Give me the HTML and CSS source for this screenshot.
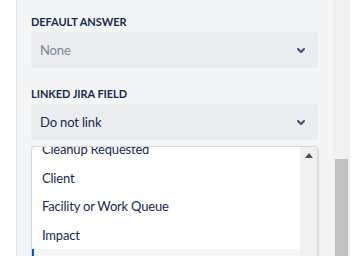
FILE: index.html
```html
<!DOCTYPE html>
<html>
<head>
<meta charset="utf-8">
<link rel="stylesheet" href="styles.css">
</head>
<body>
<div class="screen">
  <div class="gutter"></div>
  <div class="panel">
    <div class="field">
      <div class="label">DEFAULT ANSWER</div>
      <div class="select">
        <span class="value placeholder">None</span>
        <svg class="chev" width="24" height="24" viewBox="0 0 24 24"><path fill="currentColor" d="M8.292 10.293a1.009 1.009 0 000 1.419l2.939 2.965c.218.215.5.322.779.322s.556-.107.769-.322l2.93-2.955a1.01 1.01 0 000-1.419.987.987 0 00-1.406 0l-2.298 2.317-2.307-2.327a.99.99 0 00-1.406 0z"/></svg>
      </div>
    </div>
    <div class="field">
      <div class="label">LINKED JIRA FIELD</div>
      <div class="select">
        <span class="value">Do not link</span>
        <svg class="chev" width="24" height="24" viewBox="0 0 24 24"><path fill="currentColor" d="M8.292 10.293a1.009 1.009 0 000 1.419l2.939 2.965c.218.215.5.322.779.322s.556-.107.769-.322l2.93-2.955a1.01 1.01 0 000-1.419.987.987 0 00-1.406 0l-2.298 2.317-2.307-2.327a.99.99 0 00-1.406 0z"/></svg>
      </div>
      <div class="listbox">
        <div class="options">
          <div class="opt">Cleanup Requested</div>
          <div class="opt">Client</div>
          <div class="opt">Facility or Work Queue</div>
          <div class="opt">Impact</div>
          <div class="opt active">Location</div>
        </div>
        <div class="lscroll">
          <div class="arrow"></div>
        </div>
      </div>
    </div>
  </div>
  <div class="pagebar"><div class="thumb"></div></div>
  <div class="edge"></div>
</div>
</body>
</html>
```
FILE: styles.css
```css
html, body {
  margin: 0;
  padding: 0;
  background: #ffffff;
}
body {
  font-family: Lato, "Noto Sans", sans-serif;
  color: #172b4d;
  width: 357px;
  height: 256px;
  overflow: hidden;
}
.screen {
  display: flex;
  height: 256px;
}
.gutter {
  width: 16px;
  flex: none;
  background: #ffffff;
}
.panel {
  box-sizing: border-box;
  width: 317px;
  flex: none;
  background: #f4f5f7;
  border-left: 1px solid #e4e6eb;
  padding: 14px 15px 0 14px;
  overflow: hidden;
}
.field {
  margin-bottom: 18px;
}
.label {
  font-size: 11px;
  font-weight: 700;
  line-height: 16px;
  letter-spacing: -0.05px;
  color: #172b4d;
  margin-bottom: 2px;
}
.select {
  height: 36px;
  border-radius: 3px;
  background: #ebecf0;
  display: flex;
  align-items: center;
  justify-content: space-between;
  padding: 0 5px 0 9px;
}
.value {
  font-size: 13px;
  letter-spacing: -0.15px;
  color: #172b4d;
}
.value.placeholder {
  color: #7a869a;
}
.chev {
  color: #42526e;
  flex: none;
}
.listbox {
  margin-top: 6px;
  height: 112px;
  display: flex;
  background: #ffffff;
  border: 1px solid #d6d8dc;
  border-bottom: none;
  border-radius: 4px 4px 0 0;
  box-shadow: 1px 1px 2px rgba(9, 30, 66, 0.12);
  overflow: hidden;
}
.options {
  flex: 1;
  margin-top: -12px;
}
.opt {
  height: 28.5px;
  display: flex;
  align-items: center;
  padding-left: 10px;
  font-size: 13px;
  letter-spacing: -0.2px;
  color: #172b4d;
  white-space: nowrap;
}
.opt.active {
  background: #f4f5f7;
  box-shadow: inset 2px 0 0 #0052cc;
}
.lscroll {
  width: 17px;
  flex: none;
  background: #f0f0f0;
}
.arrow {
  width: 0;
  height: 0;
  margin: 6px auto 0;
  border-left: 4px solid transparent;
  border-right: 4px solid transparent;
  border-bottom: 5px solid #505050;
}
.pagebar {
  width: 17px;
  flex: none;
  background: #f0f0f0;
  display: flex;
  flex-direction: column;
  padding: 159px 2px 0;
  box-sizing: border-box;
}
.thumb {
  flex: 1;
  background: #c1c1c1;
}
.edge {
  flex: 1;
  background: #ffffff;
}
```
